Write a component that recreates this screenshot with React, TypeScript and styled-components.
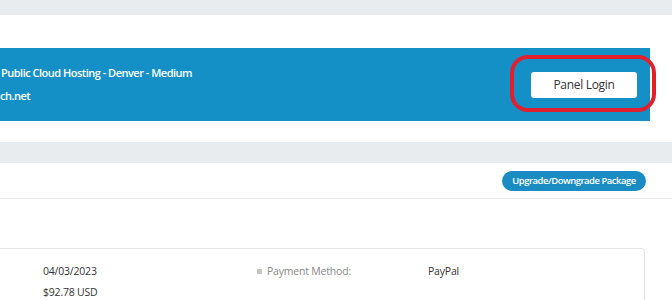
import styled, { createGlobalStyle } from 'styled-components';

const GlobalStyle = createGlobalStyle`
  html, body {
    margin: 0;
    padding: 0;
    background: #e9ecef;
    font-family: 'Open Sans', 'Liberation Sans', sans-serif;
    overflow: hidden;
  }
`;

const Page = styled.div`
  display: flex;
  flex-direction: column;
  gap: 21px;
  padding-top: 15px;
  width: 672px;
`;

const Panel = styled.section`
  background: #fff;
`;

const ProductPanel = styled(Panel)`
  padding: 33px 22px 21px 0;
`;

const ProductBox = styled.div`
  position: relative;
  display: flex;
  align-items: center;
  justify-content: space-between;
  height: 73px;
  background: #1490c6;
  padding-right: 13px;
`;

const ProductInfo = styled.div`
  display: flex;
  flex-direction: column;
  gap: 9px;
  color: #fff;
  font-size: 11px;
  font-weight: 600;
  letter-spacing: -0.5px;
  line-height: 14px;
  padding-left: 1px;
`;

const Domain = styled.span`
  margin-left: -1px;
`;

const LoginButton = styled.button`
  width: 106px;
  height: 26px;
  border: none;
  border-radius: 3px;
  background: #fff;
  color: #333;
  font-family: inherit;
  font-size: 12px;
  letter-spacing: -0.3px;
  cursor: pointer;
`;

const Highlight = styled.div`
  position: absolute;
  left: 510px;
  top: 7px;
  width: 146px;
  height: 57px;
  box-sizing: border-box;
  border: 4px solid #e0202c;
  border-radius: 18px;
  pointer-events: none;
`;

const PanelHeader = styled.div`
  display: flex;
  justify-content: flex-end;
  align-items: center;
  height: 35px;
  padding-right: 26px;
  border-bottom: 1px solid #ebebeb;
`;

const PillButton = styled.button`
  width: 144px;
  height: 20px;
  padding: 0;
  border: none;
  border-radius: 10px;
  background: #1a8cc4;
  color: #fff;
  font-family: inherit;
  font-size: 9.5px;
  font-weight: 600;
  letter-spacing: -0.5px;
`;

const PanelBody = styled.div`
  padding: 49px 27px 20px 0;
`;

const Card = styled.div`
  display: grid;
  grid-template-columns: 43px 214px 171px 1fr;
  row-gap: 6px;
  border: 1px solid #e6e6e6;
  border-left: none;
  border-radius: 0 4px 4px 0;
  padding: 15px 0 20px;
  font-size: 10.5px;
  letter-spacing: -0.2px;
  line-height: 15px;
  color: #333;
`;

const Label = styled.span`
  display: flex;
  align-items: center;
  gap: 5px;
  color: #888;
  &::before {
    content: '';
    width: 5px;
    height: 5px;
    background: #c4c4c4;
  }
`;

export default function App() {
  return (
    <>
      <GlobalStyle />
      <Page>
        <ProductPanel>
          <ProductBox>
            <ProductInfo>
              <span>Public Cloud Hosting - Denver - Medium</span>
              <Domain>ch.net</Domain>
            </ProductInfo>
            <LoginButton>Panel Login</LoginButton>
            <Highlight />
          </ProductBox>
        </ProductPanel>
        <Panel>
          <PanelHeader>
            <PillButton>Upgrade/Downgrade Package</PillButton>
          </PanelHeader>
          <PanelBody>
            <Card>
              <span />
              <span>04/03/2023</span>
              <Label>Payment Method:</Label>
              <span>PayPal</span>
              <span />
              <span>$92.78 USD</span>
            </Card>
          </PanelBody>
        </Panel>
      </Page>
    </>
  );
}
